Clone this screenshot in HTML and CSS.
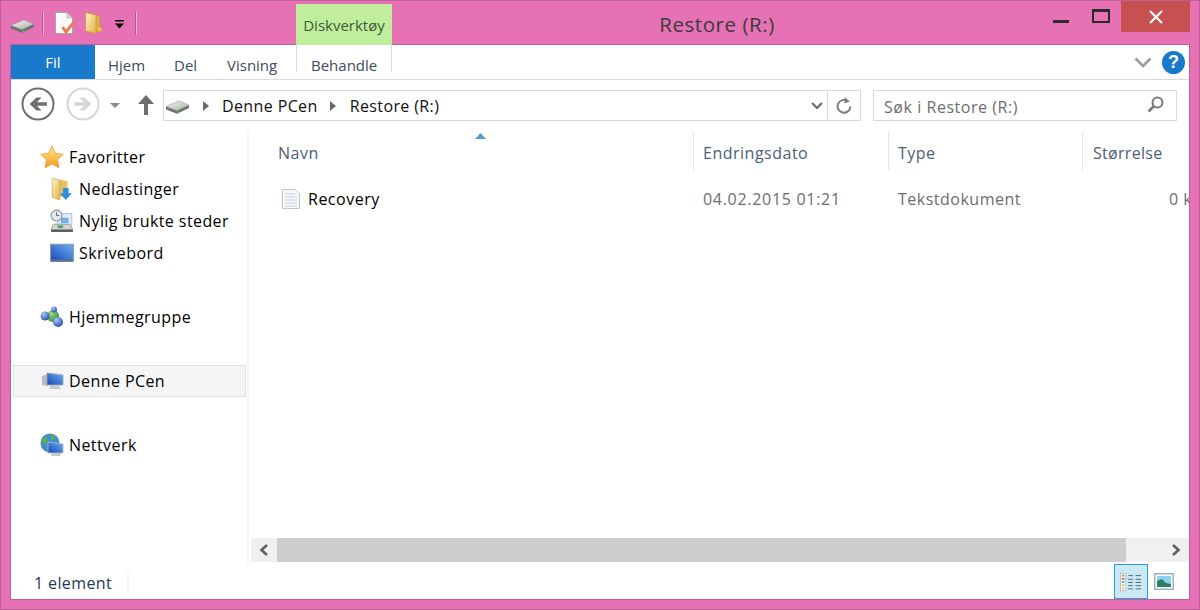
FILE: index.html
```html
<!DOCTYPE html>
<html lang="nb">
<head>
<meta charset="utf-8">
<title>Restore (R:)</title>
<link rel="stylesheet" href="styles.css">
</head>
<body>
<svg class="defs" width="0" height="0" aria-hidden="true">
  <defs>
    <linearGradient id="driveTop" x1="0" y1="0" x2="1" y2="1"><stop offset="0" stop-color="#f4f4f4"/><stop offset="1" stop-color="#a9b0a9"/></linearGradient>
    <linearGradient id="folder" x1="0" y1="0" x2="1" y2="1"><stop offset="0" stop-color="#fff6c4"/><stop offset="1" stop-color="#e2b04a"/></linearGradient>
    <linearGradient id="screen" x1="0" y1="1" x2="1" y2="0"><stop offset="0" stop-color="#1746b8"/><stop offset="1" stop-color="#6fb0f0"/></linearGradient>
    <linearGradient id="star" x1="0" y1="0" x2="0" y2="1"><stop offset="0" stop-color="#ffe896"/><stop offset="1" stop-color="#f79a1e"/></linearGradient>
    <radialGradient id="ballBlue" cx=".35" cy=".3" r=".8"><stop offset="0" stop-color="#a8c8f4"/><stop offset="1" stop-color="#1d48a8"/></radialGradient>
    <radialGradient id="ballGreen" cx=".35" cy=".3" r=".8"><stop offset="0" stop-color="#a3dc8a"/><stop offset="1" stop-color="#2d8030"/></radialGradient>
    <symbol id="drive" viewBox="0 0 24 14">
      <path d="M0 6.500 V9.500 L11 13.800 L23 8 V5 L11 10.500 Z" fill="#6f736f"/>
      <path d="M0 6.500 L13 .8 L23 5 L11 10.500 Z" fill="url(#driveTop)" stroke="#8f938f" stroke-width=".5"/>
      <rect x="11" y="11" width="2.200" height="2.200" fill="#2fc04a"/>
    </symbol>
  </defs>
</svg>
<div class="window">
  <header class="titlebar">
    <div class="qat">
      <svg class="qi-drive"><use href="#drive"/></svg>
      <span class="qat-sep"></span>
      <svg class="qi-doc" viewBox="0 0 20 22">
        <path d="M.5 .5 H12 L17.5 6 V21.5 H.5 Z" fill="#fafafa" stroke="#a8a8a8"/>
        <path d="M12 .5 V6 H17.5 Z" fill="#d8d8d8" stroke="#a8a8a8" stroke-width=".6"/>
        <path d="M7.500 15 L11 20 L19 10" fill="none" stroke="#ec7c4c" stroke-width="3"/>
      </svg>
      <svg class="qi-folder" viewBox="0 0 17 22">
        <path d="M4 1.500 L15 4 V19.500 H4 Z" fill="#dcae4e" stroke="#b98f34" stroke-width=".6"/>
        <path d="M.5 .5 L11 3 V21.500 L.5 19 Z" fill="url(#folder)" stroke="#c49a3c" stroke-width=".8"/>
        <rect x="12.500" y="15.500" width="4" height="4" fill="#f0c030"/>
      </svg>
      <svg class="qi-more" viewBox="0 0 9 9"><path d="M0 0 H9 V1.400 H0 Z M0 3.600 H9 L4.500 8.600 Z" fill="#000"/></svg>
      <span class="qat-sep last"></span>
    </div>
    <div class="context-tab">Diskverktøy</div>
    <h1 class="title">Restore (R:)</h1>
    <div class="winbtns">
      <span class="wb-min"></span>
      <span class="wb-max"></span>
      <span class="wb-close">
        <svg viewBox="0 0 14 14"><path d="M1 1 L13 13 M13 1 L1 13" stroke="#fff" stroke-width="2.200"/></svg>
      </span>
    </div>
  </header>
  <div class="client">
    <nav class="ribbon">
      <div class="tab-file">Fil</div>
      <div class="tab t-hjem">Hjem</div>
      <div class="tab t-del">Del</div>
      <div class="tab t-vis">Visning</div>
      <div class="tab t-beh">Behandle</div>
      <div class="ribbon-right">
        <svg class="rb-chev" viewBox="0 0 18 11"><path d="M1.500 1.500 L9 9 L16.500 1.500" fill="none" stroke="#9c9c9c" stroke-width="2.600"/></svg>
        <span class="help">?</span>
      </div>
    </nav>
    <div class="addressrow">
      <svg class="navbtn back" viewBox="0 0 34 34">
        <circle cx="17" cy="17" r="15.500" fill="#fff" stroke="#6e6e6e" stroke-width="2"/>
        <path d="M26 15.200 H16 L20.500 10.500 H15.500 L8.600 17 L15.500 23.500 H20.500 L16 18.800 H26 Z" fill="#6e6e6e"/>
      </svg>
      <svg class="navbtn fwd" viewBox="0 0 34 34">
        <circle cx="17" cy="17" r="15.500" fill="#fff" stroke="#d6d6d6" stroke-width="2"/>
        <path d="M8 15.200 H18 L13.500 10.500 H18.500 L25.400 17 L18.500 23.500 H13.500 L18 18.800 H8 Z" fill="#d6d6d6"/>
      </svg>
      <svg class="navdrop" viewBox="0 0 10 5"><path d="M0 0 H10 L5 5 Z" fill="#8a8a8a"/></svg>
      <svg class="navup" viewBox="0 0 16 20"><path d="M8 0 L16 9 H10 V20 H6 V9 H0 Z" fill="#6e6e6e"/></svg>
      <div class="addressbar">
        <svg class="ab-drive"><use href="#drive"/></svg>
        <svg class="crumb-arrow" viewBox="0 0 6 10"><path d="M0 0 L6 5 L0 10 Z" fill="#6a6a6a"/></svg>
        <span class="crumb">Denne PCen</span>
        <svg class="crumb-arrow" viewBox="0 0 6 10"><path d="M0 0 L6 5 L0 10 Z" fill="#6a6a6a"/></svg>
        <span class="crumb">Restore (R:)</span>
        <span class="ab-fill"></span>
        <span class="ab-drop">
          <svg viewBox="0 0 12 8"><path d="M1 1 L6 6 L11 1" fill="none" stroke="#6a6a6a" stroke-width="2.200"/></svg>
        </span>
        <span class="ab-refresh">
          <svg viewBox="0 0 16 17"><path d="M11.800 4.200 A6.400 6.400 0 1 0 14.400 9.500" fill="none" stroke="#7d7d7d" stroke-width="2"/><path d="M8.500 0 L13.800 4.400 L8.500 6.600 Z" fill="#7d7d7d"/></svg>
        </span>
      </div>
      <div class="searchbox">
        <span class="search-text">Søk i Restore (R:)</span>
        <svg viewBox="0 0 17 17"><circle cx="10.500" cy="6.500" r="5" fill="none" stroke="#7a7a7a" stroke-width="2"/><path d="M7 10 L1.500 15.500" stroke="#7a7a7a" stroke-width="2.600"/></svg>
      </div>
    </div>
    <div class="panes">
      <aside class="sidebar">
        <section class="nav-group">
          <div class="nav-item">
            <svg class="ni" viewBox="0 0 22 22"><path d="M11 .8 L14.200 7.600 L21.400 8.500 L16.100 13.600 L17.500 21 L11 17.400 L4.500 21 L5.900 13.600 L.6 8.500 L7.800 7.600 Z" fill="url(#star)" stroke="#e8a84a" stroke-width=".8"/></svg>
            <span>Favoritter</span>
          </div>
          <div class="nav-item sub">
            <svg class="ni" viewBox="0 0 20 22"><path d="M7 2 L15 4 V18 H7 Z" fill="#e6bf62"/><path d="M1 1 L8 3 V21 L1 18.500 Z" fill="url(#folder)" stroke="#c9a44e" stroke-width=".6"/><path d="M11 10 H16 V15 H19 L13.500 21 L8 15 H11 Z" fill="#2d8fdc"/></svg>
            <span>Nedlastinger</span>
          </div>
          <div class="nav-item sub">
            <svg class="ni" viewBox="0 0 22 22"><rect x="7" y="4" width="13" height="11" fill="#e4ecf4" stroke="#a8b4c0" stroke-width=".7"/><rect x="10" y="8" width="7" height="5" fill="#6fb2e8"/><circle cx="6" cy="6" r="5" fill="#dfe8ee" stroke="#7f95a6"/><path d="M6 3 V6 H8.500" fill="none" stroke="#5a6c7a" stroke-width=".9"/><path d="M3 14 L18 14 L21 19 H1 Z" fill="#d2d4d2" stroke="#8f9290" stroke-width=".7"/><rect x="1" y="19" width="20" height="2" fill="#555"/><rect x="7" y="15" width="5" height="2.500" fill="#4aa060"/></svg>
            <span>Nylig brukte steder</span>
          </div>
          <div class="nav-item sub">
            <svg class="ni" viewBox="0 0 22 18"><rect x=".5" y="1" width="21" height="15.500" fill="url(#screen)" stroke="#8c9cae"/><rect x="1" y="15" width="20" height="2" fill="#5a7390"/></svg>
            <span>Skrivebord</span>
          </div>
        </section>
        <section class="nav-group">
          <div class="nav-item">
            <svg class="ni" viewBox="0 0 24 22"><circle cx="13" cy="10" r="6" fill="url(#ballGreen)"/><circle cx="5" cy="10" r="4.500" fill="url(#ballBlue)"/><circle cx="14" cy="3.500" r="3" fill="url(#ballBlue)"/><circle cx="18" cy="16" r="5" fill="url(#ballBlue)"/></svg>
            <span>Hjemmegruppe</span>
          </div>
        </section>
        <section class="nav-group">
          <div class="nav-item selected">
            <svg class="ni ni-pc" viewBox="0 0 22 20"><path d="M0 5 L6 3 V15 L0 14 Z" fill="#b8bcbc"/><path d="M5 2 L21 4 V14 L5 14 Z" fill="url(#screen)" stroke="#98a2ac" stroke-width=".8"/><path d="M9 14 H17 L19 18 H7 Z" fill="#c8cccc"/></svg>
            <span>Denne PCen</span>
          </div>
        </section>
        <section class="nav-group">
          <div class="nav-item">
            <svg class="ni" viewBox="0 0 24 24"><circle cx="10" cy="10" r="9.500" fill="#3f8ed0"/><path d="M3 5 C7 3 9 6 7 9 C5 12 3 11 1.500 9 Z M11 1 C14 2 16 4 15 7 L11 6 Z" fill="#5cb04a"/><path d="M8 9 L23 11 V20 L8 20 Z" fill="url(#screen)" stroke="#aab4be" stroke-width=".9"/><path d="M12 20 H20 L21 23 H11 Z" fill="#c4c8c8"/></svg>
            <span>Nettverk</span>
          </div>
        </section>
      </aside>
      <main class="content">
        <div class="filelist">
          <div class="headers">
            <svg class="sort" viewBox="0 0 11 6"><path d="M0 6 L5.500 0 L11 6 Z" fill="#5a9bc8"/></svg>
            <div class="col c-name">Navn</div>
            <div class="col c-date">Endringsdato</div>
            <div class="col c-type">Type</div>
            <div class="col c-size">Størrelse</div>
          </div>
          <div class="row">
            <div class="cell c-name">
              <svg class="fileicon" viewBox="0 0 18 20">
                <path d="M.5 .5 H13 L17.500 5 V19.500 H.5 Z" fill="#f6f8fa" stroke="#c0c4c4"/>
                <path d="M3 5 H13 M3 8 H15 M3 11 H15 M3 14 H15 M3 17 H15" stroke="#c4d0dc" stroke-width="1.200"/>
              </svg>
              <span class="fname">Recovery</span>
            </div>
            <div class="cell c-date dim">04.02.2015 01:21</div>
            <div class="cell c-type dim">Tekstdokument</div>
            <div class="cell c-size dim size-val">0 kB</div>
          </div>
        </div>
        <div class="hscroll">
          <span class="sb-btn"><svg viewBox="0 0 10 12"><path d="M8 1 L2.500 6 L8 11" fill="none" stroke="#606060" stroke-width="2.600"/></svg></span>
          <span class="sb-thumb"></span>
          <span class="sb-rest"></span>
          <span class="sb-btn"><svg viewBox="0 0 10 12"><path d="M2 1 L7.500 6 L2 11" fill="none" stroke="#606060" stroke-width="2.600"/></svg></span>
        </div>
      </main>
    </div>
    <footer class="statusbar">
      <span class="count">1 element</span>
      <span class="st-sep"></span>
      <span class="st-fill"></span>
      <span class="viewbtn active">
        <svg viewBox="0 0 24 20">
          <rect x=".5" y=".5" width="6" height="19" fill="#fff" stroke="#b4bcc4"/>
          <path d="M2 3 H5" stroke="#8cab5c" stroke-width="2"/><path d="M2 6.500 H5" stroke="#e8504a" stroke-width="2"/><path d="M2 10 H5" stroke="#58a8e0" stroke-width="2"/><path d="M2 13.500 H5" stroke="#d0c050" stroke-width="2"/><path d="M2 17 H5" stroke="#e8c840" stroke-width="2"/>
          <path d="M9 3 H14 M17 3 H23 M9 7 H14 M17 7 H23 M9 10.500 H14 M17 10.500 H23 M9 14 H14 M17 14 H23 M9 17.500 H14 M17 17.500 H23" stroke="#4a6070" stroke-width="1"/>
        </svg>
      </span>
      <span class="viewbtn thumbs">
        <svg viewBox="0 0 20 17">
          <rect x=".75" y=".75" width="18.500" height="15.500" fill="#fff" stroke="#9fb0c0" stroke-width="1.500"/>
          <rect x="3" y="3" width="14" height="11" fill="#8fd0f0"/>
          <path d="M3 14 V8 L8 6 L12 10 L17 11 V14 Z" fill="#2f7f68"/>
        </svg>
      </span>
    </footer>
  </div>
</div>
</body>
</html>
```
FILE: styles.css
```css
* { box-sizing: border-box; }
html, body { margin: 0; padding: 0; height: 100%; overflow: hidden; }
body { font-family: "Open Sans", "Noto Sans", sans-serif; font-size: 16px; color: #000; background: #e671b5; }
.defs { display: block; height: 0; }
.window { width: 1200px; height: 610px; display: flex; flex-direction: column; background: #e671b5; border: 1px solid #bf5f9a; padding: 0 9px 9px; }
.titlebar { display: flex; height: 43px; flex: none; }
.qat { width: 286px; flex: none; display: flex; align-items: flex-start; padding-left: 1px; }
.qat svg { flex: none; display: block; }
.qi-drive { width: 24px; height: 14px; margin-top: 18px; }
.qat-sep { width: 2px; height: 23px; margin: 11px 0 0 7px; background: #f0b4d8; border: 0 solid #b0588f; flex: none; border-left-width: 1px; }
.qi-doc { width: 20px; height: 22px; margin: 11px 0 0 11px; }
.qi-folder { width: 17px; height: 22px; margin: 11px 0 0 10px; }
.qi-more { width: 9px; height: 9px; margin: 19px 0 0 13px; }
.qat-sep.last { margin-left: 11px; }
.context-tab { position: relative; z-index: 1; width: 96px; height: 41px; margin-top: 3px; background: #c1ee9c; color: #3e5a3a; font-size: 15px; text-align: center; line-height: 42px; flex: none; }
.title { flex: 1; margin: 0; font-size: 20.5px; letter-spacing: .55px; font-weight: 400; color: #3c3c3c; text-align: center; line-height: 47px; }
.winbtns { width: 148px; flex: none; display: flex; align-items: flex-start; }
.wb-min { width: 16px; height: 3px; margin: 19px 0 0 11px; background: #2b2b2b; flex: none; }
.wb-max { width: 18px; height: 14px; margin: 8px 0 0 23px; border: 2px solid #2b2b2b; border-top-width: 3px; flex: none; }
.wb-close { width: 69px; height: 31px; margin-left: 11px; background: #c75050; display: flex; align-items: center; justify-content: center; flex: none; }
.wb-close svg { width: 14px; height: 14px; }
.client { flex: 1; min-height: 0; background: #fff; display: flex; flex-direction: column; border: 1px solid #c05f9b; }
.ribbon { height: 35px; flex: none; display: flex; border-bottom: 1px solid #dadbdc; align-items: stretch; }
.tab-file { width: 84px; height: 34px; background: #1979ca; color: #fff; font-size: 15px; text-align: center; line-height: 35px; flex: none; }
.tab { font-size: 15px; color: #3e4c60; line-height: 40px; flex: none; }
.t-hjem { margin-left: 13px; width: 66px; }
.t-del { width: 53px; }
.t-vis { width: 69px; }
.t-beh { width: 96px; padding-left: 14px; border: 0 solid #dadbdc; border-width: 0 1px; height: 27px; overflow: visible; }
.ribbon-right { margin-left: auto; display: flex; align-items: center; padding: 0 4px 0 0; gap: 10px; }
.rb-chev { width: 18px; height: 11px; }
.help { width: 23px; height: 23px; border-radius: 50%; background: #1979ca; color: #fff; font: 700 18px/23px "Liberation Sans", sans-serif; text-align: center; }
.addressrow { height: 51px; flex: none; display: flex; align-items: flex-start; }
.navbtn { width: 34px; height: 34px; flex: none; margin-top: 7px; }
.back { margin-left: 10px; }
.fwd { margin-left: 11px; }
.navdrop { width: 10px; height: 5px; flex: none; margin: 23px 0 0 10px; }
.navup { width: 16px; height: 20px; flex: none; margin: 15px 0 0 18px; }
.addressbar { width: 698px; height: 31px; flex: none; margin: 10px 0 0 9px; border: 1px solid #d9d9d9; display: flex; align-items: center; }
.ab-drive { width: 24px; height: 14px; margin: 3px 0 0 2px; flex: none; }
.crumb-arrow { width: 6px; height: 10px; flex: none; margin: 0 13px 0 13px; }
.crumb { font-size: 16px; letter-spacing: .38px; color: #111; white-space: nowrap; }
.crumb + .crumb-arrow { margin: 0 14px 0 12px; }
.ab-fill { flex: 1; }
.ab-drop { width: 20px; height: 100%; display: flex; align-items: center; justify-content: center; flex: none; }
.ab-drop svg { width: 12px; height: 8px; }
.ab-refresh { width: 33px; height: 100%; border-left: 1px solid #d9d9d9; display: flex; align-items: center; justify-content: center; flex: none; }
.ab-refresh svg { width: 16px; height: 17px; }
.searchbox { width: 304px; height: 31px; flex: none; margin: 10px 0 0 12px; border: 1px solid #d9d9d9; display: flex; align-items: center; justify-content: space-between; padding: 0 12px 0 10px; }
.search-text { font-size: 16px; letter-spacing: .55px; color: #6d6d6d; padding-top: 2px; }
.searchbox svg { width: 17px; height: 17px; flex: none; margin-bottom: 3px; }
.panes { flex: 1; min-height: 0; display: flex; }
.sidebar { width: 238px; flex: none; border-right: 2px solid #f5f5f5; padding: 10px 0 0 2px; display: flex; flex-direction: column; gap: 32px; }
.nav-item { height: 32px; display: flex; align-items: center; padding-left: 26px; font-size: 16px; letter-spacing: .42px; width: 233px; border: 1px solid transparent; line-height: 30px; }
.nav-item .ni { width: 24px; height: 24px; flex: none; margin-right: 5px; }
.nav-item .ni-pc { width: 22px; height: 20px; margin-left: 2px; }
.nav-item.sub { padding-left: 36px; }
.nav-item.selected { background: #f5f5f5; border-color: #e1e1e1; }
.content { flex: 1; min-width: 0; display: flex; flex-direction: column; padding-left: 2px; }
.filelist { flex: 1; min-height: 0; overflow: hidden; }
.headers { display: grid; grid-template-columns: 442px 195px 194px 120px; height: 44px; position: relative; padding-top: 1px; }
.sort { position: absolute; left: 224px; top: 2px; width: 11px; height: 6px; }
.col { color: #4c607a; font-size: 16px; letter-spacing: .5px; line-height: 43px; padding-left: 9px; border-left: 1px solid #e5e5e5; height: 38px; white-space: nowrap; overflow: hidden; }
.col.c-name { padding-left: 27px; border-left: 0; }
.col.c-size { padding-left: 10px; letter-spacing: .3px; }
.row { display: grid; grid-template-columns: 442px 195px 194px 120px; height: 25px; margin-top: 11px; align-items: center; font-size: 16px; letter-spacing: .5px; white-space: nowrap; }
.cell { padding-left: 10px; }
.cell.c-name { padding-left: 31px; display: flex; align-items: center; }
.cell.c-date { letter-spacing: .7px; }
.fileicon { width: 18px; height: 20px; flex: none; margin-right: 8px; }
.dim { color: #6d6d6d; }
.size-val { padding-left: 87px; }
.hscroll { height: 24px; flex: none; display: flex; margin-bottom: 2px; background: #f0f0f0; }
.sb-btn { width: 26px; flex: none; display: flex; align-items: center; justify-content: center; }
.sb-btn svg { width: 10px; height: 12px; }
.sb-thumb { width: 849px; background: #cdcdcd; flex: none; }
.sb-rest { flex: 1; }
.statusbar { height: 35px; flex: none; display: flex; align-items: center; padding: 0 0 0 22px; }
.count { font-size: 16px; letter-spacing: .38px; color: #1e395b; padding: 2px 0 0 1px; }
.st-sep { width: 2px; height: 17px; background: #f3f3f3; margin-left: 15px; }
.st-fill { flex: 1; }
.viewbtn { width: 34px; height: 35px; display: flex; align-items: center; justify-content: center; flex: none; border: 1px solid transparent; }
.viewbtn.active { background: #cbe8f6; border-color: #26a0da; }
.viewbtn.active svg { width: 22px; height: 20px; }
.viewbtn.thumbs { width: 26px; margin-right: 15px; justify-content: flex-end; padding-right: 0; border: 0; }
.viewbtn.thumbs svg { width: 20px; height: 17px; }
```
